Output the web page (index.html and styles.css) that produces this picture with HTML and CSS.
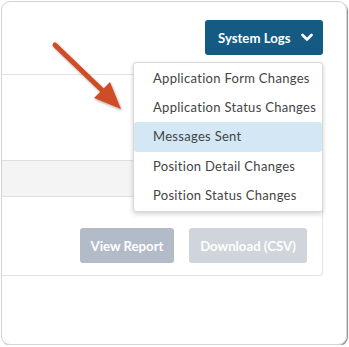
FILE: index.html
```html
<!DOCTYPE html>
<html lang="en">
<head>
    <meta charset="UTF-8">
    <meta name="viewport" content="width=device-width, initial-scale=1.0">
    <title>System Logs</title>
    <link rel="stylesheet" href="styles.css">
</head>
<body>
    <div class="frame">
        <div class="header">
            <button type="button" class="logs-btn">
                System Logs
                <svg class="chevron" width="12" height="9" viewBox="0 0 12 9">
                    <path d="M1.5 2 L6 6.5 L10.5 2" fill="none" stroke="#fff" stroke-width="2.6" stroke-linecap="round" stroke-linejoin="round"/>
                </svg>
            </button>
        </div>

        <div class="panel">
            <div class="panel-top"></div>
            <div class="panel-band"></div>
            <div class="panel-actions">
                <button type="button" class="btn btn-view">View Report</button>
                <button type="button" class="btn btn-download">Download (CSV)</button>
            </div>
        </div>

        <ul class="menu">
            <li>Application Form Changes</li>
            <li>Application Status Changes</li>
            <li class="active">Messages Sent</li>
            <li>Position Detail Changes</li>
            <li>Position Status Changes</li>
        </ul>

        <svg class="arrow" width="90" height="90" viewBox="0 0 90 90">
            <defs>
                <filter id="shadow" x="-20%" y="-20%" width="140%" height="140%">
                    <feDropShadow dx="1" dy="1.5" stdDeviation="1.2" flood-color="#000" flood-opacity="0.35"/>
                </filter>
            </defs>
            <g filter="url(#shadow)">
                <line x1="5" y1="5" x2="55" y2="53" stroke="#cf4d25" stroke-width="5" stroke-linecap="round"/>
                <polygon points="71,69 44,58 60,42" fill="#cf4d25"/>
            </g>
        </svg>
    </div>
</body>
</html>
```

FILE: styles.css
```css
* {
    box-sizing: border-box;
}
body {
    margin: 0;
    background: #fff;
    font-family: Lato, "Open Sans", sans-serif;
}
.frame {
    position: relative;
    margin: 1px 2px 0 1px;
    height: 344px;
    border: 1px solid #d4d4d4;
    border-radius: 9px;
    box-shadow: 1px 1px 1px rgba(0, 0, 0, 0.45);
    overflow: hidden;
}
.header {
    display: flex;
    justify-content: flex-end;
    padding: 18px 23px 0 0;
    height: 72px;
}
.logs-btn {
    display: flex;
    align-items: center;
    gap: 11px;
    height: 35px;
    width: 118px;
    padding: 0 0 0 13px;
    background: #145a82;
    color: #fff;
    border: none;
    border-radius: 3px;
    font-family: Lato, sans-serif;
    font-weight: 700;
    font-size: 13.2px;
}
.panel {
    margin-right: 23px;
    border: 1px solid #e3e3e3;
    border-left: none;
    border-radius: 0 4px 4px 0;
    height: 202px;
}
.panel-top {
    height: 85px;
}
.panel-band {
    height: 37px;
    background: #f4f4f4;
    border-top: 1px solid #dedede;
    border-bottom: 1px solid #dedede;
}
.panel-actions {
    display: flex;
    justify-content: flex-end;
    gap: 15px;
    padding: 31px 15px 0 0;
}
.btn {
    height: 35px;
    border: none;
    border-radius: 3px;
    color: #fff;
    font-family: Lato, sans-serif;
    font-weight: 700;
    font-size: 13.2px;
}
.btn-view {
    width: 94px;
    background: #b3bbc9;
}
.btn-download {
    width: 118px;
    background: #d0d4db;
}
.menu {
    position: absolute;
    top: 60px;
    left: 131px;
    width: 190px;
    margin: 0;
    padding: 1px 0;
    list-style: none;
    background: #fff;
    border: 1px solid #d8d8d8;
    border-radius: 3px;
    box-shadow: 0 2px 5px rgba(0, 0, 0, 0.18);
}
.menu li {
    height: 29.2px;
    line-height: 29px;
    padding-left: 19px;
    font-size: 13px;
    color: #444;
    letter-spacing: 0.3px;
}
.menu li.active {
    background: #d3e8f4;
    border-radius: 3px;
}
.arrow {
    position: absolute;
    top: 38px;
    left: 48px;
}
```
